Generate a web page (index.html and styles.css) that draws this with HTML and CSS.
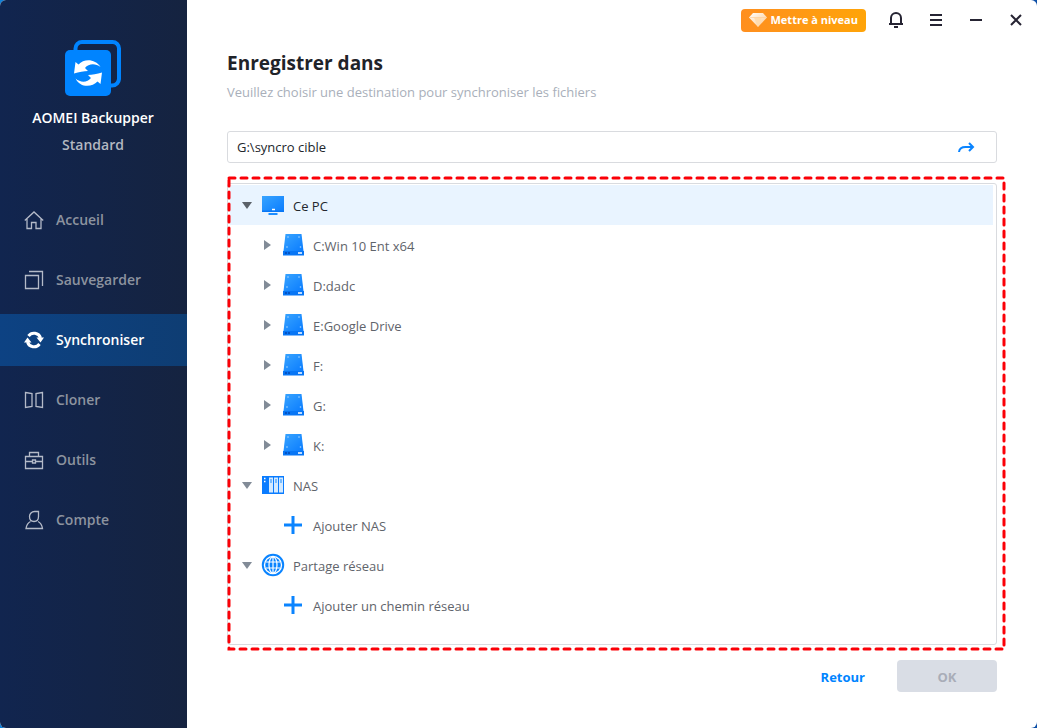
FILE: index.html
```html
<!DOCTYPE html>
<html lang="fr">
<head>
<meta charset="utf-8">
<title>AOMEI Backupper</title>
<link rel="stylesheet" href="styles.css">
</head>
<body>
<svg class="defs" width="0" height="0" aria-hidden="true">
  <defs>
    <linearGradient id="blue" x1="0" y1="0" x2="1" y2="1"><stop offset="0" stop-color="#38a4ff"/><stop offset="1" stop-color="#0a7cff"/></linearGradient>
    <linearGradient id="gem" x1="0" y1="0" x2="1" y2="1"><stop offset="0" stop-color="#fff"/><stop offset="1" stop-color="#ffc98a"/></linearGradient>
    <symbol id="drive" viewBox="0 0 24 24">
      <path d="M4.500 1h16l2 17h-20z" fill="url(#blue)"/>
      <path d="M2 18h21v4.500H2z" fill="#0876f5"/>
      <path d="M4 20h6" stroke="#0454c4" stroke-width="2" stroke-dasharray="2 1"/>
      <path d="M17 20h4" stroke="#fff" stroke-width="1.500"/>
      <g fill="#a8d6ff"><circle cx="7" cy="4" r=".8"/><circle cx="18" cy="4" r=".8"/><circle cx="6" cy="14" r=".8"/><circle cx="19.500" cy="14" r=".8"/></g>
    </symbol>
    <symbol id="plus" viewBox="0 0 24 24"><path d="M12 3v18M3 12h18" stroke="#0a84ff" stroke-width="3"/></symbol>
    <symbol id="down" viewBox="0 0 12 12"><path d="M1 3h10L6 10z" fill="currentColor"/></symbol>
    <symbol id="right" viewBox="0 0 12 12"><path d="M3 1v10L10 6z" fill="currentColor"/></symbol>
  </defs>
</svg>
<div class="window">
  <aside class="sidebar">
    <div class="brand">
      <svg class="brand-logo" viewBox="0 0 56 56" aria-hidden="true">
        <path d="M10.500 14V8.500a6.500 6.500 0 0 1 6.500-6.500h30.500a6.500 6.500 0 0 1 6.500 6.500V38a7 7 0 0 1-7 7.500h-3" fill="none" stroke="#0084ff" stroke-width="4"/>
        <rect y="10" width="46" height="46" rx="5" fill="#0084ff"/>
        <path d="M9 33.500 10.500 22l3 2.500C19 18.500 30 18.500 35.500 27c-5-4-12-3.500-15.500 1l3 3c-4 .2-9 1-14 2.500z" fill="#fff"/>
        <path d="M37 32.500 35.500 44l-3-2.500C27 47.500 15 48 10.500 38.500c5 4.500 12 4 15.500-.500l-3-3c4-.2 9-1 14-2.500z" fill="#fff"/>
      </svg>
      <strong class="brand-name">AOMEI Backupper</strong>
      <span class="brand-edition">Standard</span>
    </div>
    <nav class="nav">
      <a class="nav-item" href="#accueil">
        <svg class="nav-icon" viewBox="0 0 20 20"><path d="M.8 10.500 10 2l9.200 8.500M3 8.500v10h4.500v-6h4.500v6h5v-10"/></svg>Accueil</a>
      <a class="nav-item" href="#sauvegarder">
        <svg class="nav-icon" viewBox="0 0 20 20"><path d="M1.500 5.500h13v13h-13zM5 1.500h13.500V16"/></svg>Sauvegarder</a>
      <a class="nav-item nav-item-active" href="#synchroniser" aria-current="page">
        <svg class="nav-icon nav-icon-sync" viewBox="0 0 20 20"><path d="M4.500 6A6.800 6.800 0 0 1 16.500 8M15.500 14A6.800 6.800 0 0 1 3.500 12"/><path class="solid" d="M12.500 7.500H20L16.500 12.500zM7.500 12.500H0L3.500 7.500z"/></svg>Synchroniser</a>
      <a class="nav-item" href="#cloner">
        <svg class="nav-icon" viewBox="0 0 20 20"><path d="M1.500 2.500 8 3.500v13L1.500 17.500zM18.500 2.500 12 3.500v13l6.500 1z"/></svg>Cloner</a>
      <a class="nav-item" href="#outils">
        <svg class="nav-icon" viewBox="0 0 20 20"><path d="M1.500 6.500h17v12h-17zM5.500 6.500v-4h9v4M1.500 11.500h7M11.500 11.500h7M8.500 10h3v3h-3z"/></svg>Outils</a>
      <a class="nav-item" href="#compte">
        <svg class="nav-icon" viewBox="0 0 20 20"><path d="M14.500 1.500h-4a5 5 0 0 0-5 5c0 3 1.500 5 4.500 5s4.500-2 4.500-5zM6.500 11.500c-3 1.500-4 4-4.500 7h16.500c-.5-3-1.500-5.500-4.500-7"/></svg>Compte</a>
    </nav>
  </aside>
  <main class="content">
    <header class="titlebar">
      <button class="upgrade" type="button">
        <svg class="upgrade-icon" viewBox="0 0 18 16" aria-hidden="true"><path d="M4 1h10l4 4.500L9 15 0 5.500z" fill="url(#gem)"/><path d="M5 5.500 9 15l4-9.500z" fill="#ffdcae"/><path d="M1 5.500h16" stroke="#ffcf99" stroke-width=".7"/></svg>Mettre à niveau</button>
      <button class="tool" type="button" aria-label="Notifications"><svg class="tool-icon" viewBox="0 0 20 20"><path d="M3 14h14M5 14V8a5 5 0 0 1 10 0v6M8 17h4"/></svg></button>
      <button class="tool" type="button" aria-label="Menu"><svg class="tool-icon" viewBox="0 0 20 20"><path d="M4 5h12M4 10h12M4 15h12"/></svg></button>
      <button class="tool" type="button" aria-label="Réduire"><svg class="tool-icon" viewBox="0 0 20 20"><path d="M4 10h12"/></svg></button>
      <button class="tool" type="button" aria-label="Fermer"><svg class="tool-icon" viewBox="0 0 20 20"><path d="m5 5 10 10M15 5 5 15"/></svg></button>
    </header>
    <div class="page">
      <h1 class="title">Enregistrer dans</h1>
      <p class="subtitle">Veuillez choisir une destination pour synchroniser les fichiers</p>
      <div class="path">
        <input class="path-input" type="text" aria-label="Destination" value="G:\syncro cible">
        <button class="path-go" type="button" aria-label="Ouvrir le chemin"><svg class="path-icon" viewBox="0 0 18 14"><path d="M2 12C2.500 8 4.500 7 8.500 7H16M12 3l4 4-4 4"/></svg></button>
      </div>
      <section class="tree-panel">
        <svg class="highlight" aria-hidden="true"><rect class="highlight-line" x="2" y="2"/></svg>
        <ul class="tree">
          <li class="row row-selected"><button class="toggle" type="button" aria-label="Réduire Ce PC"><svg><use href="#down"/></svg></button>
            <svg class="row-icon" viewBox="0 0 24 24"><path d="M1 3h22v16H1z" fill="url(#blue)"/><path d="M1 17.500h22V19H1z" fill="#0876f5"/><path d="M11 16.500h3" stroke="#fff" stroke-width="1.500"/><path d="M7.500 21h9" stroke="#1d8dff" stroke-width="2"/></svg><span class="label">Ce PC</span></li>
          <li class="row row-child"><button class="toggle" type="button" aria-label="Développer C:"><svg><use href="#right"/></svg></button><svg class="row-icon"><use href="#drive"/></svg><span class="label">C:Win 10 Ent x64</span></li>
          <li class="row row-child"><button class="toggle" type="button" aria-label="Développer D:"><svg><use href="#right"/></svg></button><svg class="row-icon"><use href="#drive"/></svg><span class="label">D:dadc</span></li>
          <li class="row row-child"><button class="toggle" type="button" aria-label="Développer E:"><svg><use href="#right"/></svg></button><svg class="row-icon"><use href="#drive"/></svg><span class="label">E:Google Drive</span></li>
          <li class="row row-child"><button class="toggle" type="button" aria-label="Développer F:"><svg><use href="#right"/></svg></button><svg class="row-icon"><use href="#drive"/></svg><span class="label">F:</span></li>
          <li class="row row-child"><button class="toggle" type="button" aria-label="Développer G:"><svg><use href="#right"/></svg></button><svg class="row-icon"><use href="#drive"/></svg><span class="label">G:</span></li>
          <li class="row row-child"><button class="toggle" type="button" aria-label="Développer K:"><svg><use href="#right"/></svg></button><svg class="row-icon"><use href="#drive"/></svg><span class="label">K:</span></li>
          <li class="row"><button class="toggle" type="button" aria-label="Réduire NAS"><svg><use href="#down"/></svg></button>
            <svg class="row-icon" viewBox="0 0 24 24"><path d="M1 3h22v18H1z" fill="#0a7cff"/><path d="M8 4.500h4v15H8zM13 4.500h4v15h-4zM18 4.500h4v15h-4z" fill="#d4eaff"/><path d="M10 6v4M15 6v4M20 6v4" stroke="#1d8dff" stroke-width="1"/><path d="M3 5.500h1.500M3 8.500h1.500" stroke="#fff" stroke-width="1.500"/></svg><span class="label">NAS</span></li>
          <li class="row row-add"><button class="add" type="button"><svg class="row-icon"><use href="#plus"/></svg><span class="label">Ajouter NAS</span></button></li>
          <li class="row"><button class="toggle" type="button" aria-label="Réduire Partage réseau"><svg><use href="#down"/></svg></button>
            <svg class="row-icon" viewBox="0 0 24 24"><circle cx="12" cy="12" r="10.200" fill="#fff" stroke="#0a84ff" stroke-width="2"/><circle cx="12" cy="12" r="7.800" fill="#0a84ff"/><path d="M12 4v16M5 9h14M5 15h14" stroke="#fff" stroke-width="1.200"/><ellipse cx="12" cy="12" rx="4" ry="8" fill="none" stroke="#fff" stroke-width="1.200"/></svg><span class="label">Partage réseau</span></li>
          <li class="row row-add"><button class="add" type="button"><svg class="row-icon"><use href="#plus"/></svg><span class="label">Ajouter un chemin réseau</span></button></li>
        </ul>
      </section>
      <footer class="actions">
        <button class="back" type="button">Retour</button>
        <button class="ok" type="button" disabled>OK</button>
      </footer>
    </div>
  </main>
</div>
</body>
</html>
```
FILE: styles.css
```css
* { box-sizing: border-box; }
body {
  margin: 0;
  background: linear-gradient(90deg, #0f80d8, #0d4fa6);
  font: 13px/20px "Open Sans", "Noto Sans", sans-serif;
  color: #5f646b;
}
button, input { font: inherit; color: inherit; border: 0; padding: 0; background: none; }
svg { display: block; flex: none; }
.defs { position: absolute; }
.window { display: flex; min-height: 100vh; border-radius: 6px; overflow: hidden; background: #fff; }

.sidebar { width: 187px; flex: none; background: linear-gradient(90deg, #11254f, #152340); }
.brand { display: flex; flex-direction: column; align-items: center; padding: 40px 1px 0 0; font-size: 14px; }
.brand-logo { width: 56px; height: 56px; }
.brand-name { margin-top: 12px; color: #fff; font-weight: 600; }
.brand-edition { margin-top: 7px; color: #b3b8c1; font-weight: 600; }
.nav { display: flex; flex-direction: column; gap: 8px; margin-top: 39px; }
.nav-item {
  display: flex; align-items: center; gap: 12px; height: 52px; padding-left: 24px;
  color: #8c939f; font-size: 14px; font-weight: 600; text-decoration: none;
}
.nav-item-active { color: #fff; background: linear-gradient(90deg, #0d4283, #0e3d73); }
.nav-icon { width: 20px; height: 20px; fill: none; stroke: #b4bac8; stroke-width: 1.300; }
.nav-icon-sync { stroke: #fff; stroke-width: 3; }
.solid { fill: #fff; stroke: none; }

.content { flex: 1; min-width: 0; display: flex; flex-direction: column; }
.titlebar { display: flex; justify-content: flex-end; align-items: center; height: 40px; padding-right: 1px; }
.upgrade {
  display: flex; align-items: center; gap: 4px; height: 23px; padding: 0 8px; margin-right: 10px;
  border-radius: 4px; background: linear-gradient(90deg, #ff8f1f, #ffa408);
  color: #fff; font-size: 11px; font-weight: 700; white-space: nowrap;
}
.upgrade-icon { width: 18px; height: 16px; }
.tool { display: flex; justify-content: center; align-items: center; width: 40px; height: 40px; }
.tool-icon { width: 20px; height: 20px; fill: none; stroke: #262433; stroke-width: 2; }

.page { flex: 1; display: flex; flex-direction: column; padding: 9px 40px 36px; }
.title { margin: 0; color: #1f2329; font-size: 19px; line-height: 28px; font-weight: 700; }
.subtitle { margin: 5px 0 29px; color: #a9afba; }
.path { display: flex; align-items: center; height: 32px; border: 1px solid #d9dbdf; border-radius: 3px; }
.path-input { flex: 1; min-width: 0; height: 30px; padding: 0 9px; color: #22262c; outline: 0; }
.path-go { padding: 0 21px 0 8px; }
.path-icon { width: 18px; height: 14px; fill: none; stroke: #0a84ff; stroke-width: 2; }
.tree-panel { position: relative; flex: 1; margin-top: 20px; padding: 1px 3px 19px 2px; border: 1px solid #d9dbdf; border-radius: 3px; }
.highlight { position: absolute; left: -1px; top: -8px; width: calc(100% + 11px); height: calc(100% + 15px); pointer-events: none; }
.highlight-line {
  width: calc(100% - 4px); height: calc(100% - 4px);
  fill: none; stroke: #fb0007; stroke-width: 3; stroke-dasharray: 6 6; stroke-linecap: round;
}
.tree { margin: 0; padding: 0; list-style: none; }
.row { display: flex; align-items: center; height: 40px; padding-left: 11px; }
.row-selected { background: #e9f4ff; color: #23272d; }
.row-child { padding-left: 31px; }
.row-add { padding-left: 51px; }
.toggle { width: 12px; height: 12px; margin-right: 8px; color: #828b97; }
.toggle svg { width: 12px; height: 12px; }
.row-selected .toggle { color: #5b6169; }
.row-icon { width: 24px; height: 24px; margin-right: 8px; }
.label { padding-top: 2px; }
.add { display: flex; align-items: center; }
.actions { display: flex; justify-content: flex-end; gap: 16px; margin-top: 15px; }
.back, .ok { height: 32px; padding-top: 2px; border-radius: 4px; font-weight: 700; }
.back { padding-left: 16px; padding-right: 16px; color: #0084ff; }
.ok { width: 100px; background: #d9dde5; color: #a9adb8; }
```
